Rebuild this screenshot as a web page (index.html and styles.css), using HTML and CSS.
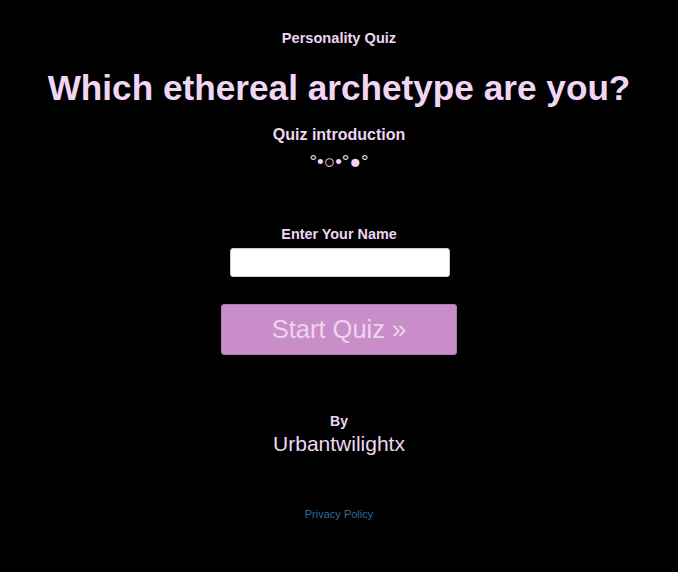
FILE: index.html
```html
<!DOCTYPE html>
<html>
<head>
<meta charset="utf-8">
<link rel="stylesheet" href="styles.css">
</head>
<body>
<main class="page">
  <div class="kicker">Personality Quiz</div>
  <h1 class="title">Which ethereal archetype are you?</h1>
  <div class="intro">Quiz introduction</div>
  <div class="decor">°•○•°●°</div>
  <form class="form">
    <label class="label" for="name">Enter Your Name</label>
    <input class="input" id="name" type="text">
    <button class="start" type="button">Start Quiz »</button>
  </form>
  <div class="by">By</div>
  <div class="author">Urbantwilightx</div>
  <a class="privacy" href="#">Privacy Policy</a>
</main>
</body>
</html>
```
FILE: styles.css
```css
html, body {
  margin: 0;
  padding: 0;
  background: #000;
}
body {
  font-family: "Liberation Sans", Arial, sans-serif;
  color: #efd6f3;
}
.page {
  display: flex;
  flex-direction: column;
  align-items: center;
  padding-top: 30px;
}
.kicker {
  font-weight: bold;
  font-size: 14.6px;
  line-height: 16px;
}
.title {
  margin: 22px 0 0;
  font-size: 35.2px;
  line-height: 40px;
  font-weight: bold;
}
.intro {
  margin-top: 18px;
  font-weight: bold;
  font-size: 16px;
  line-height: 18px;
}
.decor {
  margin-top: 7px;
  font-size: 19px;
  line-height: 22px;
}
.form {
  display: flex;
  flex-direction: column;
  align-items: center;
  margin-top: 53px;
}
.label {
  font-weight: bold;
  font-size: 14.4px;
  line-height: 16px;
}
.input {
  margin: 6px 0 0 2px;
  width: 220px;
  height: 29px;
  box-sizing: border-box;
  border: 1px solid #ccc;
  border-radius: 3px;
  background: #fff;
}
.start {
  margin-top: 27px;
  width: 236px;
  height: 51px;
  border: 1px solid #b07ab0;
  border-radius: 3px;
  background: #c98dc9;
  color: #ecd5ec;
  font-family: "Liberation Sans", Arial, sans-serif;
  font-size: 25.5px;
}
.by {
  margin-top: 58px;
  font-weight: bold;
  font-size: 14px;
  line-height: 16px;
}
.author {
  margin-top: 3px;
  font-size: 21px;
  line-height: 24px;
}
.privacy {
  margin-top: 52px;
  font-size: 11px;
  line-height: 13px;
  color: #2b6e9e;
  text-decoration: none;
}
```
